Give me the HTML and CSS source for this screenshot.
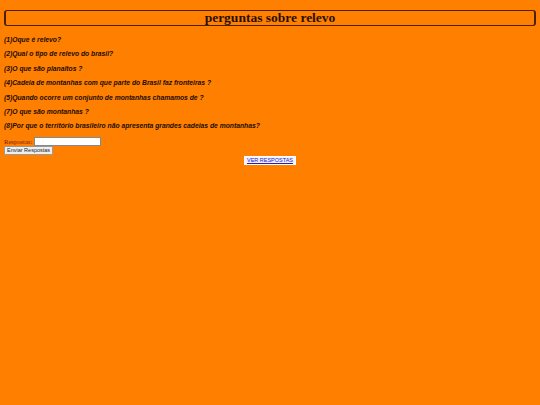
FILE: index.html
```html
<!DOCTYPE html>
<html>
<head>
<meta charset="utf-8">
<link rel="stylesheet" href="styles.css">
</head>
<body>
<div class="banner"><h1 class="title">perguntas sobre relevo</h1></div>
<div class="questions">
<p class="q">(1)Oque é relevo?</p>
<p class="q">(2)Qual o tipo de relevo do brasil?</p>
<p class="q">(3)O que são planaltos ?</p>
<p class="q">(4)Cadeia de montanhas com que parte do Brasil faz fronteiras ?</p>
<p class="q">(5)Quando ocorre um conjunto de montanhas chamamos de ?</p>
<p class="q">(7)O que são montanhas ?</p>
<p class="q">(8)Por que o território brasileiro não apresenta grandes cadeias de montanhas?</p>
</div>
<form class="form">
<div class="row"><label class="label">Respostas:</label><input class="field" type="text"></div>
<button class="btn" type="button">Enviar Respostas</button>
</form>
<div class="center"><a class="link" href="#">VER RESPOSTAS</a></div>
</body>
</html>
```
FILE: styles.css
```css
html, body { background: #ff8000; }
body { margin: 0; padding: 10px 4px 0; }
.banner {
  height: 14px;
  border: 1px solid #4a2000;
  border-left-width: 2px;
  border-right-width: 2px;
  border-radius: 3px;
  display: flex;
  align-items: center;
  justify-content: center;
}
.title {
  margin: 0;
  font-family: "Liberation Serif", serif;
  font-size: 13.5px;
  line-height: 14px;
  font-weight: bold;
  color: #2a0e00;
}
.questions { margin-top: 10px; }
.q {
  margin: 0 0 6.4px;
  font-family: "Liberation Sans", Arial, sans-serif;
  font-size: 6.75px;
  line-height: 8px;
  font-weight: bold;
  font-style: italic;
  color: #1c0c00;
}
.form { margin-top: 3px; }
.row { display: flex; align-items: center; height: 9px; }
.label {
  font-family: "Liberation Serif", serif;
  font-size: 6.6px;
  color: #7a1a00;
  margin-right: 2px;
}
.field {
  width: 67px;
  height: 9px;
  box-sizing: border-box;
  border: 1px solid #888;
  padding: 0;
  background: #fff;
  margin: 0;
}
.btn {
  display: block;
  margin-top: 0;
  height: 9px;
  padding: 0 2px;
  font-family: "Liberation Sans", Arial, sans-serif;
  font-size: 5.5px;
  line-height: 7px;
  color: #222;
  background: #efefef;
  border: 1px solid #999;
  border-radius: 1px;
}
.center { text-align: center; margin-top: 1px; font-size: 0; line-height: 0; }
.link {
  display: inline-block;
  background: #f4f0ff;
  color: #2020c0;
  font-family: "Liberation Sans", Arial, sans-serif;
  font-size: 5.5px;
  line-height: 7px;
  padding: 0 2px;
  border: 1px solid #fff;
}
```
